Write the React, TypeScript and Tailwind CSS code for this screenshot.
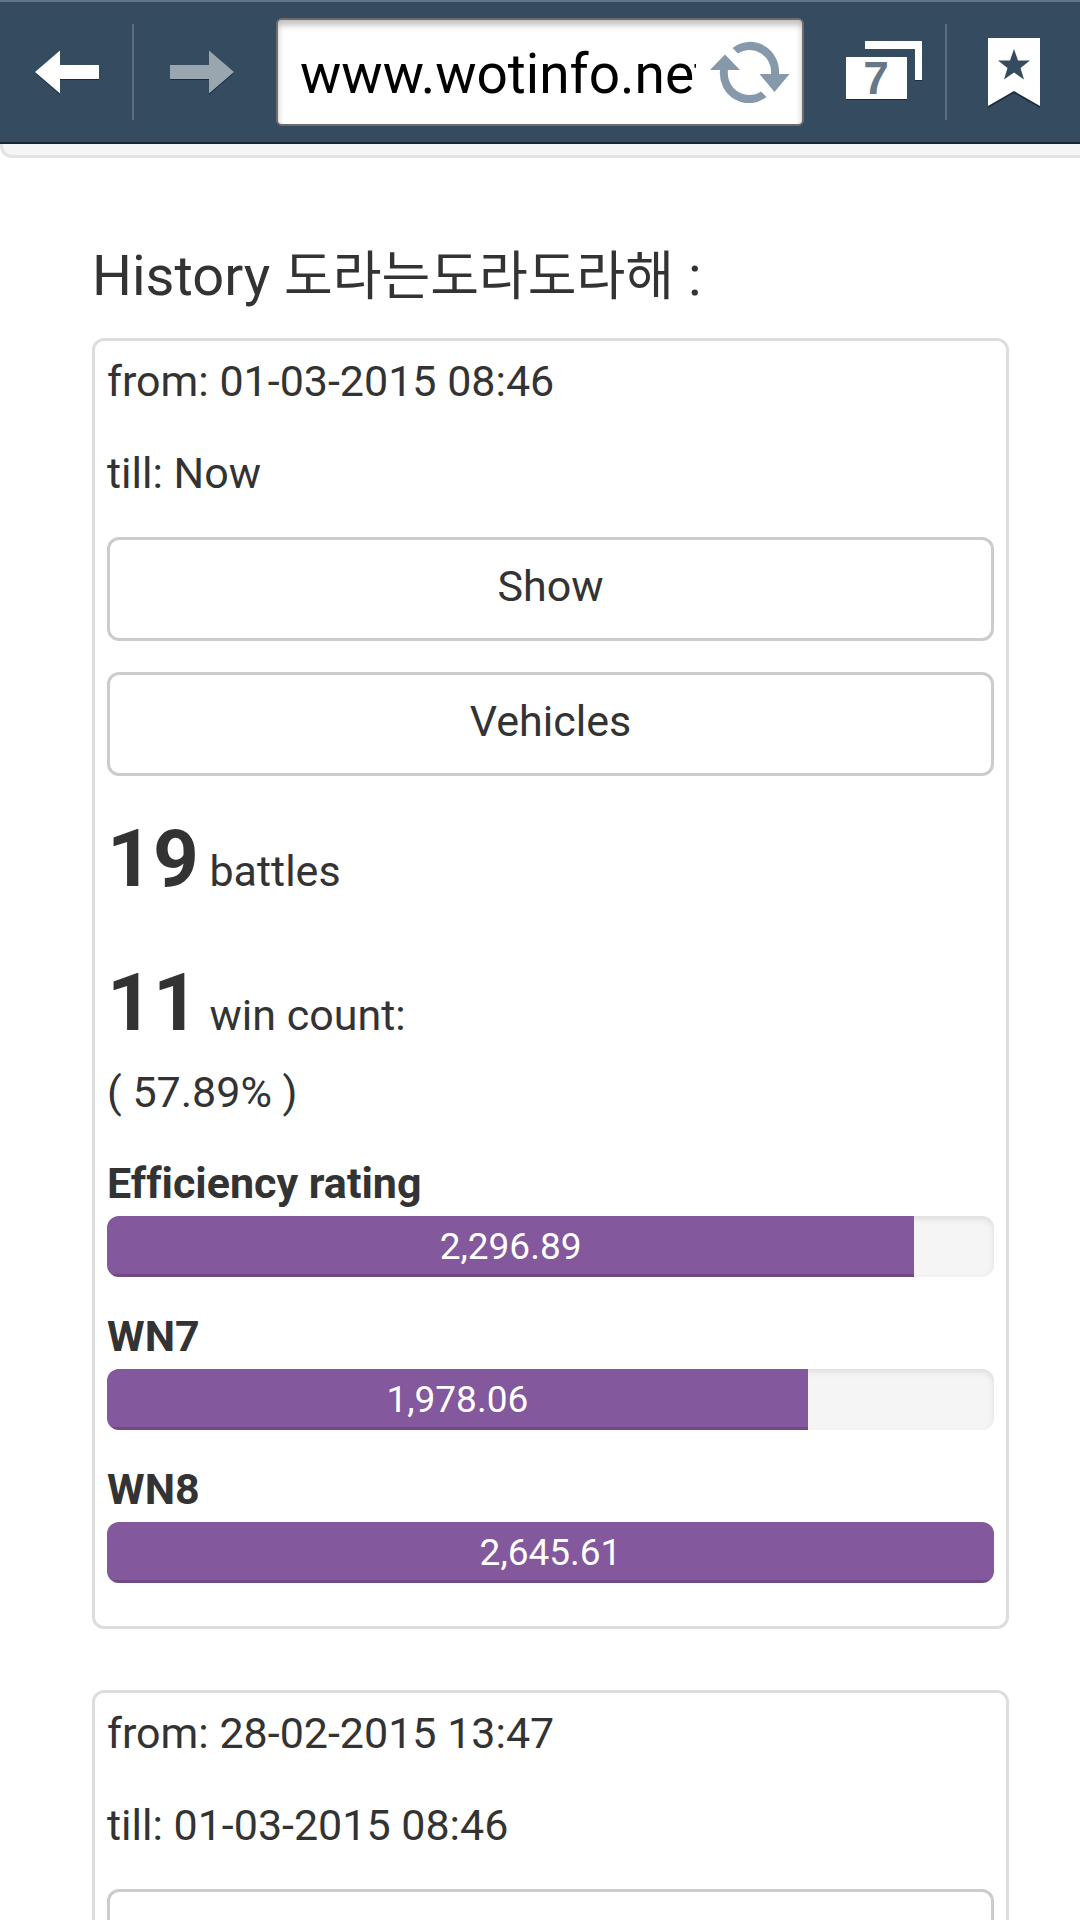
import { useState } from "react";

interface IRating {
	label: string;
	value: string;
	percent: number;
}

interface IHistoryEntry {
	from: string;
	till: string;
	battles?: number;
	wins?: number;
	winRate?: string;
	ratings?: IRating[];
}

const entries: IHistoryEntry[] = [
	{
		from: "01-03-2015 08:46",
		till: "Now",
		battles: 19,
		wins: 11,
		winRate: "57.89%",
		ratings: [
			{ label: "Efficiency rating", value: "2,296.89", percent: 91 },
			{ label: "WN7", value: "1,978.06", percent: 79 },
			{ label: "WN8", value: "2,645.61", percent: 100 },
		],
	},
	{
		from: "28-02-2015 13:47",
		till: "01-03-2015 08:46",
	},
];

const ArrowIcon = ({ className }: { className?: string }) => (
	<svg width="66" height="46" viewBox="0 0 66 46" className={className}>
		<path d="M1 24 26 3v14h39v14H26v15z" fill="#1d2c3b" />
		<path d="M1 23 26 1.5V16h39v14H26v14.5z" fill="currentColor" />
	</svg>
);

const RefreshIcon = () => (
	<svg width="80" height="62" viewBox="0 0 80 62" fill="#8599ab">
		<path d="M22.500 7A29 30 0 0 1 69 33h10.500L64.500 51 49.500 33H61A21.500 22 0 0 0 28 12.500z" />
		<path d="M56.500 56A29 30 0 0 1 10 29H0L15 13.500 30 29H18A21.500 22 0 0 0 51 50.500z" />
	</svg>
);

const BookmarkIcon = () => (
	<svg width="54" height="72" viewBox="0 0 54 72">
		<path d="M1 3h52v69L27 57 1 72z" fill="#1d2c3b" />
		<path d="M1 2h52v68L27 55 1 70z" fill="#fff" />
		<path
			d="m27 13 4 11.500h12L33.500 32 37 43.500l-10-7-10 7L20.500 32 11 24.500h12z"
			fill="#344b60"
		/>
	</svg>
);

const Toolbar = () => {
	const [url, setUrl] = useState("www.wotinfo.net");

	return (
		<header className="flex h-36 shrink-0 items-center border-t-2 border-b-2 border-t-[#607587] border-b-[#172736] bg-[#344b60]">
			<button
				aria-label="Back"
				className="flex w-[132px] shrink-0 justify-center pl-0.5 text-white"
			>
				<ArrowIcon />
			</button>
			<div className="h-24 w-0.5 shrink-0 bg-[#5c6f81]" />
			<button
				aria-label="Forward"
				disabled
				className="mr-1.5 flex w-[136px] shrink-0 justify-center text-[#9aa6af]"
			>
				<ArrowIcon className="rotate-y-180" />
			</button>
			<div className="flex h-[108px] min-w-0 flex-1 items-center rounded-md border-2 border-[#716c6c] bg-white pr-3 pl-[22px] shadow-[inset_0_5px_6px_rgba(0,0,0,0.25)]">
				<input
					aria-label="Address"
					value={url}
					onChange={(e) => setUrl(e.target.value)}
					className="min-w-0 flex-1 bg-transparent pt-1 text-[55px] text-black outline-none"
				/>
				<button aria-label="Reload" className="ml-3.5 shrink-0">
					<RefreshIcon />
				</button>
			</div>
			<button
				aria-label="Windows"
				className="ml-[18px] flex w-[123px] shrink-0 justify-center"
			>
				<span className="relative mb-1 block h-[58px] w-[76px]">
					<span className="absolute top-0 right-0 h-[39px] w-[57px] border-t-8 border-r-8 border-white shadow-[0_1px_0_#1d2c3b]" />
					<span className="absolute bottom-0 left-0 h-[50px] w-[69px] bg-[#344b60]" />
					<span className="absolute bottom-0 left-0 flex h-[42px] w-[61px] items-center justify-center bg-white font-['Liberation_Sans',sans-serif] text-[46px] leading-none font-bold text-[#687788] shadow-[0_1px_0_#1d2c3b]">
						7
					</span>
				</span>
			</button>
			<div className="h-24 w-0.5 shrink-0 bg-[#5c6f81]" />
			<button
				aria-label="Bookmarks"
				className="flex w-[133px] shrink-0 justify-center"
			>
				<BookmarkIcon />
			</button>
		</header>
	);
};

const CardButton = ({ children }: { children: string }) => (
	<button className="h-[104px] w-full rounded-xl border-3 border-[#ccc] bg-white pb-1.5">
		{children}
	</button>
);

const RatingBar = ({ rating }: { rating: IRating }) => (
	<div className="mb-[31px]">
		<h3 className="mb-1 font-bold">{rating.label}</h3>
		<div className="overflow-hidden rounded-xl bg-[#f5f5f5] shadow-[inset_0_3px_6px_rgba(0,0,0,0.1)]">
			<div
				className="bg-[#83589c] text-center text-[37px] leading-[61px] text-white shadow-[inset_0_-3px_0_rgba(0,0,0,0.15)]"
				style={{ width: `${rating.percent}%` }}
			>
				{rating.value}
			</div>
		</div>
	</div>
);

const HistoryCard = ({ entry }: { entry: IHistoryEntry }) => (
	<section className="mb-[61px] rounded-xl border-3 border-[#ddd] p-3 text-[43px] leading-[57px]">
		<p className="mb-[35px]">from: {entry.from}</p>
		<p className="mb-[35px]">till: {entry.till}</p>
		<div className="flex flex-col gap-[31px]">
			<CardButton>Show</CardButton>
			<CardButton>Vehicles</CardButton>
		</div>
		{entry.ratings && (
			<>
				<p className="mt-[27px] mb-[31px]">
					<b className="text-[80px] leading-[113px]">{entry.battles}</b> battles
				</p>
				<p>
					<b className="text-[80px] leading-[113px]">{entry.wins}</b> win count:
				</p>
				<p className="mb-[31px] leading-[64px]">( {entry.winRate} )</p>
				{entry.ratings.map((rating) => (
					<RatingBar key={rating.label} rating={rating} />
				))}
			</>
		)}
	</section>
);

const App = () => {
	return (
		<div className="flex h-screen flex-col overflow-hidden bg-white font-[Roboto,'Noto_Sans_CJK_KR',sans-serif] text-[#333] [font-variant-ligatures:none]">
			<Toolbar />
			<main className="flex-1 overflow-y-auto [scrollbar-width:none]">
				<div className="h-3.5 rounded-bl-xl border-b-3 border-l-3 border-[#e3e3e3] bg-[#f5f5f5]" />
				<div className="pt-[87px] pr-[71px] pl-[92px]">
					<h2 className="mb-[29px] text-[56px] leading-[63px]">
						History <span className="text-[53px]">도라는도라도라해</span> :
					</h2>
					{entries.map((entry) => (
						<HistoryCard key={entry.from} entry={entry} />
					))}
				</div>
			</main>
		</div>
	);
};

export default App;
